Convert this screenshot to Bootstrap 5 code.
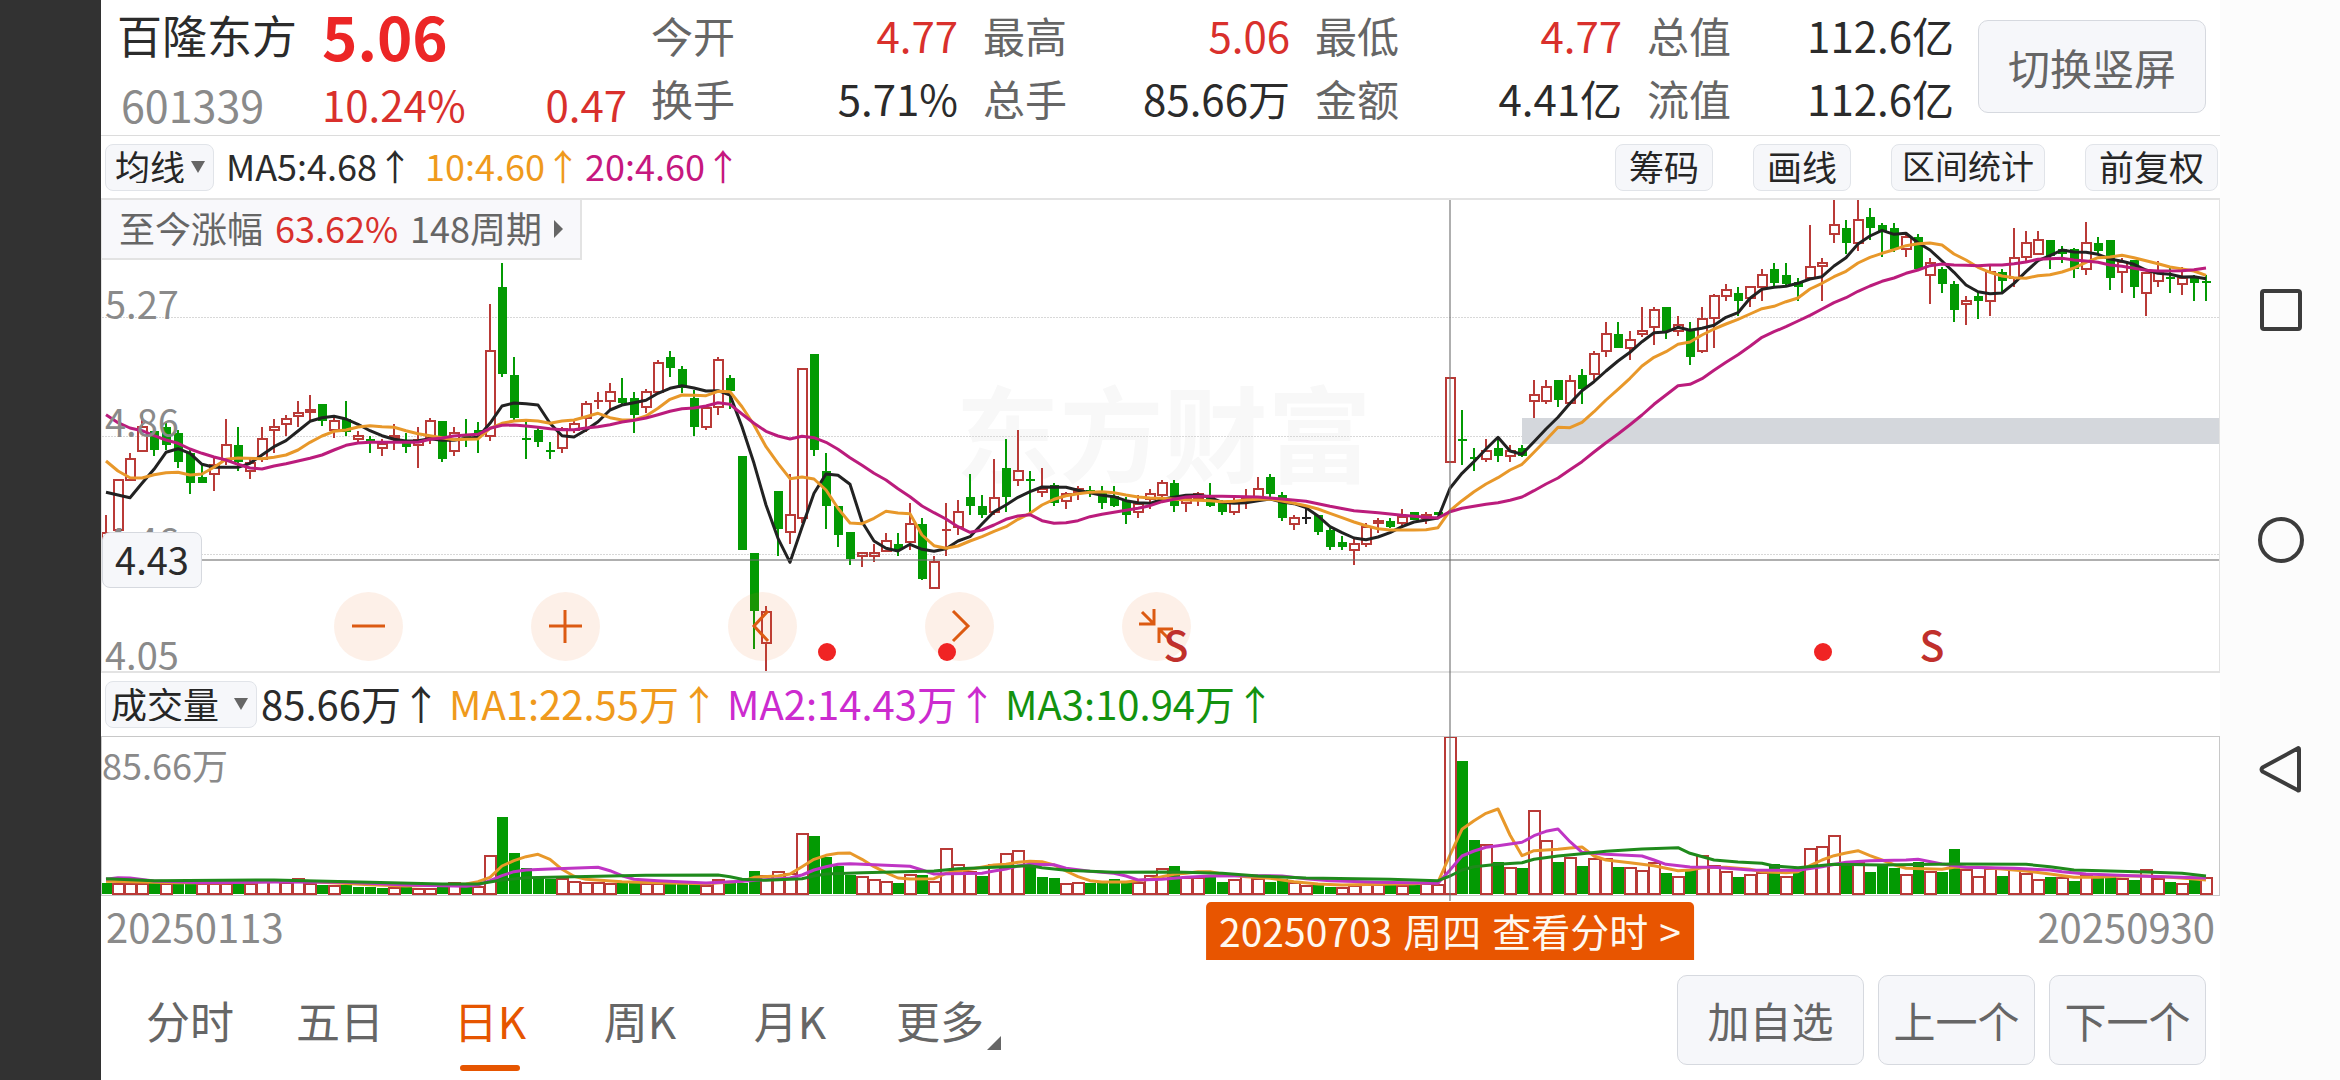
<!DOCTYPE html>
<html lang="zh-CN">
<head>
<meta charset="utf-8">
<meta name="viewport" content="width=device-width, initial-scale=1">
<title>百隆东方 601339 日K</title>
<link href="https://cdn.jsdelivr.net/npm/bootstrap@5.3.0/dist/css/bootstrap.min.css" rel="stylesheet">
<style>
  :root { --ink:#2b2b2b; --dim:#666; --faint:#8a8a8a; --up:#d9302c; --candle-up:#b93a37; --down:#039a03; --hot:#e65500; --rule:#e3e3e3; --soft:#f6f7fa; --edge:#d6d9df; }
  body { font-family:"Noto Sans CJK SC","Noto Sans",sans-serif; color:var(--ink); background:#fff; }
  button, select { font-family:inherit; }
  .cutout { width:101px; background:#323232; }
  .sysbar { width:120px; background:#fcfcfc; gap:182px; }
  .sysbar button { width:48px; height:48px; }
  .sysbar svg { display:block; fill:none; stroke:#3c3c3c; stroke-width:4; stroke-linejoin:round; }
  .text-up { color:var(--up); }
  .text-dim { color:var(--dim); }
  .text-faint { color:var(--faint); }
  .c-ma10 { color:#ef9a1c; } .c-ma20 { color:#c6187f; } .c-vma2 { color:#cc2bcf; } .c-vma3 { color:#13920f; }

  .quote-head { height:136px; border-bottom:1px solid #dcdcdc; padding:0 14px 0 16px; }
  .ident { width:534px; font-size:42px; }
  .ident-name { width:205px; }
  .ident .line-a { height:66px; line-height:70px; }
  .ident .line-b { height:70px; line-height:76px; }
  .ident .stock-code { font-size:43px; }
  .stock-name { font-size:45px; font-weight:400; }
  .last-price { font-size:60px; font-weight:700; color:#ec2626; }
  .ident-price { width:305px; }
  .stats { gap:25px; padding-top:3px; font-size:42px; line-height:63px; }
  .stat-pair { flex:1 1 0; }
  .soft-btn { background:var(--soft); border:1px solid var(--edge); border-radius:10px; color:var(--dim); font-size:42px; line-height:1; padding:0; }
  .rotate-btn { width:228px; height:93px; margin:20px 0 0 24px; }

  .tool-row { height:62px; padding-left:4px; padding-right:2px; font-size:36px; line-height:46px; }
  .tool-row > span { padding-bottom:4px; }
  .pill { background:var(--soft); border:1px solid #e1e4e9; border-radius:8px; height:47px; color:#262626; font-size:35px; line-height:1; padding:0 13px 4px; }
  .pill-tight { font-size:33px; padding:0 10px 4px; }
  .pill-group { gap:40px; }
  .pick { position:relative; }
  .pick select { appearance:none; width:100%; outline:0; display:block; }
  .pick::after { content:""; position:absolute; top:17px; right:9px; border:7px solid transparent; border-top:12px solid #666; border-bottom:0; pointer-events:none; }
  .pick-ma { width:109px; } .pick-ma select { padding:0 0 4px 9px; }
  .pick-vol { width:152px; } .pick-vol select { padding:0 0 4px 5px; font-size:36px; }
  .vol-row { height:63px; font-size:40px; }

  .charts, .plot { position:relative; }
  .plot svg.graph { display:block; width:100%; }
  .plot-k { border:1px solid var(--rule); border-width:2px 1px; }
  .plot-v { border:1px solid #c8c8c8; }
  .graph-k { height:471px; } .graph-v { height:158px; }
  .cross-v { position:absolute; top:2px; bottom:-5px; width:2px; margin-left:-1px; background:rgba(110,110,110,.55); }
  .over { position:absolute; }
  .tick { left:3px; font-size:38px; line-height:40px; color:var(--faint); }
  .tick-vol { left:0; top:7px; font-size:36px; line-height:40px; color:var(--faint); }
  .cross-tag { left:0; top:332px; width:100px; height:56px; line-height:52px; font-size:38px; text-align:center; background:var(--soft); border:1px solid var(--edge); border-radius:8px; }
  .gain { left:0; top:0; height:60px; padding:0 17px; font-size:36px; line-height:54px; background:#f8f8fb; border:1px solid var(--rule); border-width:0 2px 2px 0; }
  .gain a { color:var(--dim); text-decoration:none; gap:12px; }
  .tri-r { margin-top:4px; border:9px solid transparent; border-left-color:#666; border-left-width:9px; border-right:0; }
  .brandmark { left:50%; top:155px; margin-left:3px; transform:translateX(-50%); font-size:104px; line-height:150px; font-weight:700; color:#f8f8f8; white-space:nowrap; }
  .zoomers { left:232px; top:392px; gap:128px; }
  .zoomers button { width:69px; height:69px; border-radius:50%; background:rgba(236,106,32,.1); }
  .zoomers svg { display:block; width:69px; height:69px; fill:none; stroke:#dc5a12; stroke-width:3; }
  .dot-mark { width:18px; height:18px; top:443px; margin-left:-8px; border-radius:50%; background:#f02424; }
  .s-mark { top:413px; width:40px; margin-left:-18px; text-align:center; font-size:41px; font-weight:500; line-height:60px; color:#c0302c; }

  .dates { height:64px; padding:0 5px; font-size:40px; line-height:60px; color:var(--faint); position:relative; }
  .day-tag { top:6px; height:58px; padding:0 13px; gap:11px; border-radius:5px 5px 0 0; background:#e85500; color:#fff8ef; font-size:39px; line-height:56px; text-decoration:none; white-space:nowrap; transform:translateX(-50%); }
  .day-tag:hover { color:#fff; }
  .foot { height:120px; padding:0 14px 0 14px; }
  .foot .nav-link { width:150px; padding:0; text-align:center; font-size:44px; line-height:120px; height:120px; color:var(--dim); position:relative; }
  .foot .nav-link.active { color:var(--hot); }
  .foot .nav-link.active::after { content:""; position:absolute; left:45px; bottom:9px; width:60px; height:6px; border-radius:3px; background:var(--hot); }
  .more-tab::after { content:""; position:absolute; left:122px; top:76px; border-left:14px solid transparent; border-bottom:14px solid #666; }
  .foot .soft-btn { width:157px; height:90px; }
  .foot .soft-btn.wide-btn { width:187px; }
  .foot-btns { gap:14px; }
</style>
<script src="https://cdn.jsdelivr.net/npm/bootstrap@5.3.0/dist/js/bootstrap.bundle.min.js"></script>
</head>
<body class="d-flex min-vh-100 overflow-hidden">
<div class="cutout flex-shrink-0"></div>

<main class="flex-fill">
  <header class="quote-head d-flex">
    <div class="ident d-flex flex-shrink-0">
      <div class="ident-name">
        <h1 class="stock-name line-a m-0">百隆东方</h1>
        <div class="line-b stock-code text-faint ps-1">601339</div>
      </div>
      <div class="ident-price">
        <div class="last-price line-a">5.06</div>
        <div class="line-b text-up d-flex justify-content-between"><span>10.24%</span><span>0.47</span></div>
      </div>
    </div>
    <div class="stats d-flex flex-fill">
      <div class="stat-pair"><div class="d-flex justify-content-between"><span class="text-dim">今开</span><span class="text-up">4.77</span></div><div class="d-flex justify-content-between"><span class="text-dim">换手</span><span>5.71%</span></div></div>
      <div class="stat-pair"><div class="d-flex justify-content-between"><span class="text-dim">最高</span><span class="text-up">5.06</span></div><div class="d-flex justify-content-between"><span class="text-dim">总手</span><span>85.66万</span></div></div>
      <div class="stat-pair"><div class="d-flex justify-content-between"><span class="text-dim">最低</span><span class="text-up">4.77</span></div><div class="d-flex justify-content-between"><span class="text-dim">金额</span><span>4.41亿</span></div></div>
      <div class="stat-pair"><div class="d-flex justify-content-between"><span class="text-dim">总值</span><span>112.6亿</span></div><div class="d-flex justify-content-between"><span class="text-dim">流值</span><span>112.6亿</span></div></div>
    </div>
    <button type="button" class="soft-btn rotate-btn flex-shrink-0">切换竖屏</button>
  </header>

  <div class="tool-row d-flex align-items-center">
    <div class="pick pick-ma"><select class="pill" aria-label="主图指标"><option>均线</option><option>BOLL</option></select></div>
    <span class="ps-2 ms-1">MA5:4.68↑</span>
    <span class="c-ma10 ps-2 ms-1">10:4.60↑</span>
    <span class="c-ma20 ps-1">20:4.60↑</span>
    <div class="pill-group d-flex ms-auto">
      <button type="button" class="pill">筹码</button>
      <button type="button" class="pill">画线</button>
      <button type="button" class="pill pill-tight">区间统计</button>
      <button type="button" class="pill">前复权</button>
    </div>
  </div>

  <div class="charts">
    <section class="plot plot-k" id="kPlot">
      <div class="over brandmark" aria-hidden="true">东方财富</div>
      <svg class="graph graph-k position-relative" id="kGraph" viewBox="0 0 2117 471" preserveAspectRatio="none" role="img" aria-label="日K线图"></svg>
      <span class="over tick" style="top:83px">5.27</span>
      <span class="over tick" style="top:201px">4.86</span>
      <span class="over tick" style="top:320px">4.46</span>
      <span class="over tick" style="top:434px">4.05</span>
      <div class="over gain"><a href="#" class="d-flex align-items-center"><span>至今涨幅</span><span class="text-up">63.62%</span><span>148周期</span><i class="tri-r"></i></a></div>
      <div class="over cross-tag">4.43</div>
      <div class="over zoomers d-flex">
        <button type="button" class="border-0 p-0" aria-label="缩小"><svg viewBox="-34 -34 69 69"><path d="M-16 0H17"/></svg></button>
        <button type="button" class="border-0 p-0" aria-label="放大"><svg viewBox="-34 -34 69 69"><path d="M-16 0H17M0-16V17"/></svg></button>
        <button type="button" class="border-0 p-0" aria-label="向左"><svg viewBox="-34 -34 69 69"><path d="M6-15L-8 0 6 15"/></svg></button>
        <button type="button" class="border-0 p-0" aria-label="向右"><svg viewBox="-34 -34 69 69"><path d="M-6-15L9 0-6 15"/></svg></button>
        <button type="button" class="border-0 p-0" aria-label="收起"><svg viewBox="-34 -34 69 69"><path d="M-14-14L-2-2M-2-17V-2H-17M3 3L15 15M17 3H3V17"/></svg></button>
      </div>
    </section>

    <div class="tool-row vol-row d-flex align-items-center">
      <div class="pick pick-vol"><select class="pill" aria-label="副图指标"><option>成交量</option><option>MACD</option></select></div>
      <span class="ps-1">85.66万↑</span>
      <span class="c-ma10 ps-2">MA1:22.55万↑</span>
      <span class="c-vma2 ps-2">MA2:14.43万↑</span>
      <span class="c-vma3 ps-2">MA3:10.94万↑</span>
    </div>

    <section class="plot plot-v">
      <svg class="graph graph-v" id="vGraph" viewBox="0 0 2117 158" preserveAspectRatio="none" role="img" aria-label="成交量图"></svg>
      <span class="over tick-vol">85.66万</span>
    </section>
    <div class="cross-v" id="crossV"></div>
  </div>

  <div class="dates d-flex justify-content-between">
    <span>20250113</span>
    <a href="#" class="over day-tag d-flex" id="dayTag"><span>20250703</span><span>周四</span><span>查看分时</span><span>&gt;</span></a>
    <span>20250930</span>
  </div>

  <footer class="foot d-flex align-items-center">
    <nav class="nav flex-nowrap">
      <a class="nav-link" href="#">分时</a>
      <a class="nav-link" href="#">五日</a>
      <a class="nav-link active" href="#">日K</a>
      <a class="nav-link" href="#">周K</a>
      <a class="nav-link" href="#">月K</a>
      <a class="nav-link more-tab" href="#">更多</a>
    </nav>
    <div class="foot-btns d-flex ms-auto">
      <button type="button" class="soft-btn wide-btn">加自选</button>
      <button type="button" class="soft-btn">上一个</button>
      <button type="button" class="soft-btn">下一个</button>
    </div>
  </footer>
</main>

<nav class="sysbar flex-shrink-0 d-flex flex-column align-items-center justify-content-center" aria-label="系统导航">
  <button type="button" class="border-0 bg-transparent p-0" aria-label="最近任务"><svg width="48" height="48"><rect x="6" y="5" width="38" height="38" rx="2"/></svg></button>
  <button type="button" class="border-0 bg-transparent p-0" aria-label="主页"><svg width="48" height="48"><circle cx="25" cy="24" r="21"/></svg></button>
  <button type="button" class="border-0 bg-transparent p-0" aria-label="返回"><svg width="48" height="48"><path d="M43 3V44Q43 45 41.500 44L6.500 25.500Q4.500 23.500 6.500 21.500L41.500 2.500Q43 1.500 43 3Z"/></svg></button>
</nav>

<script>
// One entry per trading day: colour, body top, body bottom, high, low (plot levels, 3 units to a pixel).
const candles = `R1025,1060,975,1060 R868,1022,868,1022 R805,872,790,872 R708,785,668,785 G722,780,722,798 G712,764,695,780 G729,816,720,833 G790,878,775,912 G862,878,825,878 R822,855,805,903
R762,815,686,825 G765,815,712,842 R815,846,805,868 R745,810,712,815 R708,722,686,790 R683,704,675,738 R665,680,632,710 R657,670,615,690 G642,692,642,708 R690,722,680,745
G686,727,632,738 R735,750,722,757 G746,754,738,790 R760,776,748,797 R735,748,703,781 G755,772,730,790 R748,768,712,833 R690,748,685,763 G694,807,692,816 R727,785,712,798
G735,739,686,772 G720,735,695,790 R481,740,343,754 G291,552,220,561 G554,684,501,690 G744,750,690,807 G720,755,712,772 G780,786,757,807 R715,777,712,790 R700,722,686,728
R639,688,633,725 R630,636,606,657 R604,635,580,657 G624,640,563,642 G624,675,606,728 R604,655,598,670 R516,608,510,608 G501,535,484,561 G537,595,528,610 G624,711,600,738
R650,714,645,719 R508,653,501,675 G563,604,554,657 G799,1080,799,1080 G1089,1263,1089,1378 R1262,1363,1247,1450 G904,1018,904,1097 R972,1030,853,1062 R534,986,534,1000 G492,781,492,798
G843,948,790,1018 G948,1036,948,1071 G1027,1107,1027,1124 R1087,1100,1087,1132 R1087,1100,1062,1115 R1051,1085,1028,1085 G1063,1080,1028,1097 R999,1058,940,1080 G1002,1167,984,1170 R1113,1197,1098,1197
R1016,1022,940,1097 R964,1013,931,1035 G922,947,853,974 G949,974,914,983 R920,970,808,974 G835,921,747,965 R841,872,720,887 G866,872,844,965 R894,910,835,922 G885,938,878,948
R910,935,905,956 R894,908,888,930 G901,909,887,922 G910,938,888,956 G918,947,888,950 G930,974,922,1001 R940,970,914,983 R910,930,897,956 R877,917,870,920 G879,947,870,965
R925,943,915,965 R910,928,905,948 G915,947,879,950 G935,965,930,974 R930,970,925,974 R920,940,897,956 R893,925,861,930 G861,913,852,922 G914,983,905,992 R981,1004,974,1019
K981,987,952,1001 G974,1026,974,1035 G1020,1070,1015,1080 G1055,1070,1037,1080 R1059,1082,1045,1124 R1008,1065,1000,1070 R990,1003,984,1028 G993,1010,984,1015 R977,1003,957,1008 G967,990,967,990
R972,987,965,1001 G967,974,967,974 R560,820,560,820 G748,754,660,825 G800,806,773,842 R780,811,747,816 G773,798,750,816 R780,802,765,816 G773,798,765,800 R613,635,571,685
R587,635,571,641 G571,631,571,650 R569,643,554,645 G554,596,536,641 R490,556,484,570 R429,486,396,500 G431,474,396,475 R446,476,423,509 R420,434,352,440 R358,415,352,465
G352,422,352,447 R403,425,378,438 G422,500,396,525 R385,486,352,490 R315,388,313,474 R298,320,282,333 G309,333,291,377 R289,328,287,350 R253,293,238,333 G238,280,220,287
G256,281,220,285 G276,290,264,333 R227,268,106,270 R217,232,203,333 R103,135,27,158 G115,158,90,192 R86,162,27,184 G80,114,54,150 G106,125,98,202 G115,178,98,185
R137,180,132,202 G141,237,133,237 R217,258,204,342 G238,281,230,308 G282,360,273,395 R331,346,317,404 G317,333,308,386 R243,337,221,377 G246,272,238,308 R200,268,114,290
R156,205,124,215 R148,196,124,196 G150,197,150,237 G178,193,168,219 G177,237,175,264 R156,241,97,255 G159,184,142,195 G150,263,150,299 R212,248,205,308 G211,290,211,325
R245,311,245,377 R243,275,212,290 G260,266,230,308 R260,284,230,316 G264,280,255,333 G273,279,255,333`.split(/\s+/);

// Moving averages as day:level pairs.
const ma5 = "0:907 2:923 3:880 4:838 5:787 6:776 7:790 8:823 9:832 11:832 12:820 13:795 14:770 15:752 16:723 17:694 18:683 19:679 20:687 21:703 22:722 23:737 24:748 25:753 26:752 27:746 28:751 29:751 30:745 31:742 32:700 33:648 34:639 35:641 36:645 37:700 38:737 39:741 40:720 41:695 42:660 43:645 44:638 45:631 46:610 47:595 48:587 49:594 50:603 51:602 52:615 53:710 54:820 55:945 56:1045 57:1117 58:1012 59:910 60:852 61:856 62:883 63:995 64:1053 65:1075 66:1083 67:1063 68:1078 69:1084 70:1076 71:1053 72:1040 73:1002 74:965 75:945 76:922 77:905 78:891 80:892 81:901 83:916 84:920 85:932 86:938 87:940 88:928 89:922 90:916 91:915 92:922 93:937 94:940 95:938 96:932 97:927 98:936 99:941 100:953 101:978 102:1010 103:1028 104:1044 105:1049 106:1041 107:1028 108:1010 109:996 110:990 111:984 112:895 113:850 114:815 115:777 116:742 117:783 118:793 119:755 120:717 121:682 122:640 123:602 124:575 125:543 126:513 127:487 128:455 129:428 130:426 131:412 132:421 133:415 134:406 135:382 136:368 137:325 138:298 139:292 140:289 141:280 142:267 143:260 144:228 145:203 146:162 147:138 148:121 149:133 150:130 151:158 152:180 153:213 154:247 155:285 156:305 157:311 158:309 159:280 160:245 161:212 162:197 163:180 164:186 165:187 166:193 167:207 168:214 169:223 170:240 171:250 172:253 173:261 174:260 175:266";
const ma10 = "0:813 1:843 2:863 3:864 4:854 5:848 6:847 7:855 8:852 9:832 10:808 11:804 13:806 14:802 15:795 16:780 17:757 18:738 19:724 20:720 21:711 22:707 23:710 24:712 25:722 26:731 27:737 28:743 29:749 30:748 31:747 32:715 33:700 34:693 35:691 36:693 37:700 38:693 39:690 40:680 41:670 42:683 43:690 44:690 45:678 46:655 47:628 48:615 49:616 50:617 51:604 52:605 53:650 54:705 55:770 56:820 57:866 58:861 59:867 60:900 61:955 62:999 63:1001 64:985 65:964 66:969 67:971 68:1035 69:1067 70:1075 71:1068 72:1053 73:1040 74:1024 75:1010 76:988 77:970 78:945 79:928 80:917 81:911 82:907 83:905 84:908 85:915 86:921 87:924 88:925 90:930 91:931 92:932 93:935 94:934 95:930 96:928 97:927 98:933 99:940 100:947 101:957 102:970 103:983 104:996 105:1007 106:1016 107:1020 109:1020 110:1019 111:1013 112:962 113:932 114:905 115:882 116:863 117:840 118:823 119:787 120:750 121:712 122:713 123:697 124:665 125:630 126:598 127:565 128:528 129:502 130:485 131:463 132:456 133:435 134:417 135:402 136:388 137:372 138:356 139:349 140:335 141:324 142:297 143:280 144:260 145:244 146:219 147:202 148:190 149:179 150:167 151:161 152:159 153:165 154:192 155:210 156:232 157:247 158:258 159:263 160:265 161:257 162:254 163:246 164:234 165:217 166:203 167:201 168:196 169:203 170:212 171:221 172:231 173:237 174:243 175:256";
const ma20 = "0:674 1:698 2:714 3:722 4:737 5:750 6:760 7:777 8:790 9:801 10:810 11:823 12:834 13:837 14:828 15:821 16:813 17:805 18:795 19:780 20:766 21:759 22:757 26:757 27:748 28:744 29:738 30:735 31:733 32:715 33:706 34:705 35:708 36:712 37:716 38:719 39:719 40:714 41:710 42:704 43:696 44:691 45:684 46:674 47:664 48:656 49:654 50:648 51:638 52:643 53:672 54:700 55:724 56:738 57:747 58:739 59:743 60:757 61:778 62:803 63:826 64:850 65:870 66:896 67:920 68:948 69:968 70:987 71:1010 72:1027 73:1020 74:1005 75:988 76:978 77:974 78:992 79:1000 80:998 81:992 82:980 83:973 84:967 85:961 86:955 87:947 88:935 89:928 90:921 91:919 93:919 96:921 98:927 100:934 102:949 104:962 106:968 108:976 110:982 111:984 112:965 113:955 115:943 116:938 117:931 118:921 119:902 120:882 121:864 122:839 123:815 124:786 125:758 126:732 127:704 128:675 129:643 130:615 131:587 132:583 133:566 134:541 135:517 136:494 137:469 138:442 139:425 140:410 141:393 142:376 143:357 144:338 145:323 146:304 147:288 148:274 149:264 150:250 151:240 152:227 153:222 154:225 155:226 156:227 157:225 158:225 159:221 160:216 161:208 162:206 163:205 164:210 165:213 166:217 167:225 168:229 169:235 170:241 171:243 173:242 174:239 175:234";

// Volume columns: colour and top level.
const volumes = `G640 R638 R638 R638 G640 R640 G642 G642 R640 R640 R640 G640 R640 R630 R628 R635 R624 R640 G645 R646 G645 G650 G650 G653 R652 G652 R653 R653 G650 R636 G650 R648 R554 G441 G550 G594 G622 G628 R625 R632 R635 R637 R638 G640 G640 R640 R640 G642 G643 G643
R646 R626 G635 G638 G604 R615 R603 R608 R490 G497 G560 G588 G616 R617 R626 R634 G638 R612 G615 R632 R535 R581 R602 G617 R581 R549 R540 G587 G620 G625 R639 R637 G640 G640 G626 G637 R636 R616 R595 G588 R622 R620 G622 G636 R628 R612 R625 G636 G628 R637
R645 G643 G650 R650 R645 R642 R642 G645 R645 G645 R640 R642 R198 G274 G510 R523 G575 R590 G594 R419 R510 G575 R560 G587 R565 R563 G592 R590 R600 R577 G610 R617 G600 R554 R584 R603 G620 R612 R605 G583 R617 G600 R534 R529 R494 G583 R575 G605 G583 G593
R612 G575 R602 G607 G537 R598 R617 R595 G618 R595 R610 R628 G620 R620 G632 R613 G625 G618 R625 G630 R598 R625 G635 R640 G630 R620`.split(/\s+/);
const vma1 = "0:634 3:636 6:638 10:638 16:632 18:637 22:644 25:648 28:645 30:642 31:635 32:622 33:588 34:572 35:560 36:553 37:568 38:598 39:619 40:628 43:635 46:638 50:641 53:634 54:622 56:618 57:612 58:590 59:568 60:556 61:550 62:549 63:568 64:590 65:608 66:624 67:627 69:626 70:610 71:603 72:598 74:585 75:583 76:577 77:574 78:575 79:585 80:603 81:620 82:632 83:636 85:636 87:628 88:620 89:613 90:610 91:605 92:605 93:612 95:620 97:625 99:635 101:642 103:645 106:643 109:641 111:636 112:555 113:478 114:452 115:430 116:417 117:495 118:557 119:542 121:538 122:534 123:531 124:558 125:570 127:578 129:587 131:602 132:600 133:593 135:592 137:598 138:605 140:608 141:605 142:587 143:570 144:557 145:549 146:542 147:557 148:570 149:584 150:595 153:598 154:592 156:592 158:597 160:603 162:612 164:622 166:622 168:618 170:618 172:622 174:627 175:630";
const vma2 = "0:628 1:623 2:624 4:633 8:638 14:636 20:637 25:645 30:649 31:645 32:632 33:617 34:605 35:600 37:597 41:592 42:602 43:617 44:628 46:632 50:639 53:634 57:624 58:615 59:600 60:590 61:583 62:581 67:589 68:600 69:612 73:610 74:603 75:597 76:588 77:583 79:584 80:595 82:604 84:610 85:618 86:630 88:628 90:622 92:618 96:617 98:618 100:626 102:632 106:637 111:640 112:600 113:558 114:543 115:532 116:527 118:517 119:497 120:484 121:477 122:515 123:547 125:553 128:558 129:570 130:583 132:591 134:592 137:600 141:601 143:590 145:577 147:572 150:570 151:568 153:582 155:592 159:595 162:600 163:605 165:612 170:619 175:624";
const vma3 = "0:626 4:632 14:630 22:637 28:642 31:642 33:630 35:623 45:616 51:615 52:620 53:628 55:631 58:626 59:618 60:612 63:608 69:603 71:596 75:590 77:587 78:593 80:601 84:607 89:606 93:610 96:618 100:624 107:628 111:632 112:618 113:600 114:590 116:583 118:578 119:568 121:558 123:551 125:544 128:537 131:533 132:550 134:570 136:576 138:580 139:588 141:593 144:583 148:585 154:582 160:583 162:590 164:600 170:606 173:610 175:618";

const W = 2117, xOf = i => 4 + 12 * i;
const ky = v => Math.round((v - 30) / 3), vy = v => Math.round((v - 201) / 3);
const hue = { R: '#b93a37', G: '#039a03', K: '#222' };
const line = (src, off, color) => `<polyline fill="none" stroke="${color}" stroke-width="3" stroke-linejoin="round" points="${src.split(' ').map(p => { const [i, v] = p.split(':'); return xOf(+i) + ',' + ((v - off) / 3).toFixed(1); }).join(' ')}"/>`;

let k = '';
for (const y of [117, 236, 354]) k += `<path d="M0 ${y}.5H${W}" stroke="#d8d8d8" stroke-dasharray="2 1"/>`;
k += `<rect x="1420" y="218" width="697" height="26" fill="#d4d7dc"/>`;
candles.forEach((c, i) => {
  const [t, b, h, l] = c.slice(1).split(',').map(n => ky(+n)), x = xOf(i), f = hue[c[0]];
  if (h < t) k += `<rect x="${x - 1}" y="${h}" width="2" height="${t - h}" fill="${f}"/>`;
  if (l > b) k += `<rect x="${x - 1}" y="${b}" width="2" height="${l - b}" fill="${f}"/>`;
  if (c[0] === 'R' && b - t > 2) k += `<rect x="${x - 4}" y="${t + 1}" width="9" height="${b - t - 2}" fill="none" stroke="${f}" stroke-width="2"/>`;
  else k += `<rect x="${x - 4}" y="${t}" width="9" height="${Math.max(b - t, 2)}" fill="${f}"/>`;
});
k += line(ma5, 30, '#222') + line(ma10, 30, '#e8982a') + line(ma20, 30, '#bb1c7c');
k += `<rect x="0" y="359" width="${W}" height="2" fill="#6e6e6e" fill-opacity=".55"/>`;
document.getElementById('kGraph').innerHTML = k;

let v = '';
volumes.forEach((c, i) => {
  const t = vy(+c.slice(1)), x = xOf(i);
  v += c[0] === 'R'
    ? `<rect x="${x - 5}" y="${t + 1}" width="11" height="${156 - t}" fill="#fff" stroke="${hue.R}" stroke-width="2"/>`
    : `<rect x="${x - 5}" y="${t}" width="11" height="${157 - t}" fill="${hue.G}"/>`;
});
v += line(vma1, 201, '#e8982a') + line(vma2, 201, '#bf35c4') + line(vma3, 201, '#1f8a1c');
document.getElementById('vGraph').innerHTML = v;

// Markers pinned to their trading day.
const pct = i => xOf(i) / W * 100 + '%';
const plot = document.getElementById('kPlot');
[[60, 'dot'], [70, 'dot'], [89, 's'], [143, 'dot'], [152, 's']].forEach(([i, kind]) => {
  const m = document.createElement('span');
  m.className = 'over ' + kind + '-mark';
  m.style.left = pct(i);
  if (kind === 's') m.textContent = 'S';
  plot.append(m);
});
for (const id of ['crossV', 'dayTag']) document.getElementById(id).style.left = (xOf(112) + 1) / (W + 2) * 100 + '%';
</script>
</body>
</html>
